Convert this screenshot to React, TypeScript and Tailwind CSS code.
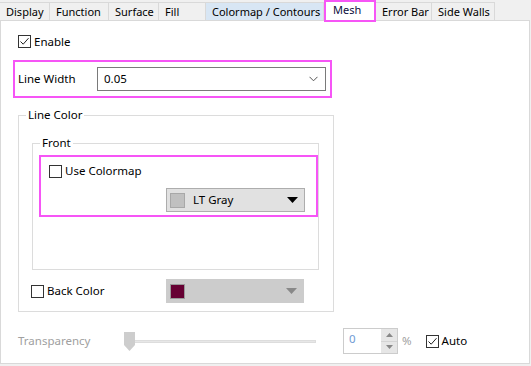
import React from 'react';

const tabs = [
  { label: 'Display', w: 'w-[50px]' },
  { label: 'Function', w: 'w-[59px]' },
  { label: 'Surface', w: 'w-[50px]' },
  { label: 'Fill', w: 'w-[47px]' },
  { label: 'Colormap / Contours', w: 'w-[118px]', blue: true },
  { label: 'Mesh', w: 'w-[52px]', active: true },
  { label: 'Error Bar', w: 'w-[56px]' },
  { label: 'Side Walls', w: 'w-[63px]' },
];

function Check({ checked }: { checked?: boolean }) {
  return (
    <span className="flex h-[13px] w-[13px] shrink-0 items-center justify-center border border-[#333333] bg-white">
      {checked && (
        <svg width="11" height="11" viewBox="0 0 11 11">
          <path d="M1.5 5.5 L4.2 8.2 L9.5 2.2" fill="none" stroke="#222" strokeWidth="1" />
        </svg>
      )}
    </span>
  );
}

function DownTri({ color }: { color: string }) {
  return (
    <svg width="11" height="6" viewBox="0 0 11 6">
      <path d="M0 0 H11 L5.5 6 Z" fill={color} />
    </svg>
  );
}

export default function App() {
  return (
    <div className="h-[366px] w-[531px] bg-[#f0f0f0] text-[11.5px] text-black" style={{ fontFamily: '"Noto Sans", sans-serif' }}>
      {/* tabs */}
      <div className="flex h-[20px] items-end whitespace-nowrap text-[11px]">
        {tabs.map((t) =>
          t.active ? (
            <div
              key={t.label}
              className={`${t.w} relative z-10 -mb-[2px] flex h-[22px] items-start border-2 border-[#f655f6] bg-white pl-[7px] leading-[16px] text-[#0c0c3c]`}
            >
              {t.label}
            </div>
          ) : (
            <div
              key={t.label}
              className={`${t.w} flex h-[18px] items-center border-t border-r border-[#d9d9d9] pl-[6px] leading-[16px] ${t.blue ? 'bg-[#d8e6f4]' : 'bg-[#f0f0f0]'}`}
            >
              {t.label}
            </div>
          )
        )}
      </div>

      {/* panel */}
      <div className="flex h-[344px] w-[530px] flex-col border border-[#d9d9d9] bg-white">
        <div className="ml-[17px] mt-[12px] flex h-[17px] items-center gap-[3px] leading-[16px]">
          <Check checked />
          <span>Enable</span>
        </div>

        <div className="ml-[12px] mt-[10px] flex h-[38px] w-[319px] items-center border-2 border-[#f655f6]">
          <span className="ml-[3px] w-[79px] leading-[16px]">Line Width</span>
          <div className="flex h-[24px] w-[229px] items-center justify-between border border-[#7a7a7a] bg-white pl-[6px] pr-[7px]">
            <span className="leading-[16px]">0.05</span>
            <svg width="9" height="6" viewBox="0 0 9 6">
              <path d="M0.5 0.8 L4.5 4.8 L8.5 0.8" fill="none" stroke="#555" strokeWidth="1" />
            </svg>
          </div>
        </div>

        {/* Line Color group */}
        <div className="ml-[17px] mt-[17px] flex w-[316px] flex-col border border-[#dcdcdc] pb-[8px]">
          <span className="-mt-[9px] ml-[7px] w-fit bg-white px-[2px] leading-[16px]">Line Color</span>

          <div className="ml-[13px] mt-[20px] flex w-[287px] flex-col border border-[#dcdcdc]">
            <span className="-mt-[9px] ml-[7px] w-fit bg-white px-[2px] leading-[16px]">Front</span>
            <div className="mb-[52px] ml-[6px] mt-[4px] flex h-[62px] flex-col border-2 border-[#f655f6]">
              <div className="ml-[8px] mt-[6px] flex h-[16px] items-center gap-[3px] leading-[16px]">
                <Check />
                <span>Use Colormap</span>
              </div>
              <div className="ml-[125px] mt-[9px] flex h-[24px] w-[139px] items-center border border-[#adadad] bg-[#e1e1e1] pl-[3px] pr-[6px]">
                <span className="h-[15px] w-[15px] border border-[#a8a8a8] bg-[#c0c0c0]" />
                <span className="ml-[8px] flex-1 leading-[16px]">LT Gray</span>
                <DownTri color="#000" />
              </div>
            </div>
          </div>

          <div className="mt-[9px] flex h-[24px] items-center">
            <div className="ml-[12px] flex w-[135px] items-center gap-[3px] leading-[16px]">
              <Check />
              <span>Back Color</span>
            </div>
            <div className="flex h-[24px] w-[138px] items-center bg-[#cccccc] pl-[4px] pr-[7px]">
              <span className="h-[15px] w-[15px] border border-[#999999] bg-[#660033]" />
              <span className="flex-1" />
              <DownTri color="#888888" />
            </div>
          </div>
        </div>

        {/* Transparency row */}
        <div className="mt-[16px] flex h-[26px] items-center">
          <span className="ml-[17px] w-[106px] leading-[16px] text-[#a0a0a0]">Transparency</span>
          <div className="relative flex h-[20px] w-[192px] items-center">
            <div className="ml-[6px] h-[3px] flex-1 border border-[#dddddd] bg-[#e7e7e7]" />
            <svg className="absolute left-0 top-[1px]" width="11" height="19" viewBox="0 0 11 19">
              <path d="M0 0 H11 V13 L5.5 19 L0 13 Z" fill="#cdcdcd" />
            </svg>
          </div>
          <div className="ml-[27px] flex h-[26px] w-[55px] border border-[#cccccc] bg-white">
            <span className="flex-1 pl-[5px] pt-[2px] leading-[16px] text-[#6f9bd4]">0</span>
            <div className="flex w-[16px] flex-col bg-[#e6e6e6]">
              <div className="flex flex-1 items-center justify-center border-b border-[#d4d4d4]">
                <svg width="7" height="4" viewBox="0 0 7 4"><path d="M0 4 H7 L3.5 0 Z" fill="#888" /></svg>
              </div>
              <div className="flex flex-1 items-center justify-center">
                <svg width="7" height="4" viewBox="0 0 7 4"><path d="M0 0 H7 L3.5 4 Z" fill="#888" /></svg>
              </div>
            </div>
          </div>
          <span className="ml-[4px] leading-[16px] text-[#a0a0a0]">%</span>
          <div className="ml-[14px] flex items-center gap-[3px] leading-[16px]">
            <Check checked />
            <span>Auto</span>
          </div>
        </div>
      </div>
    </div>
  );
}
